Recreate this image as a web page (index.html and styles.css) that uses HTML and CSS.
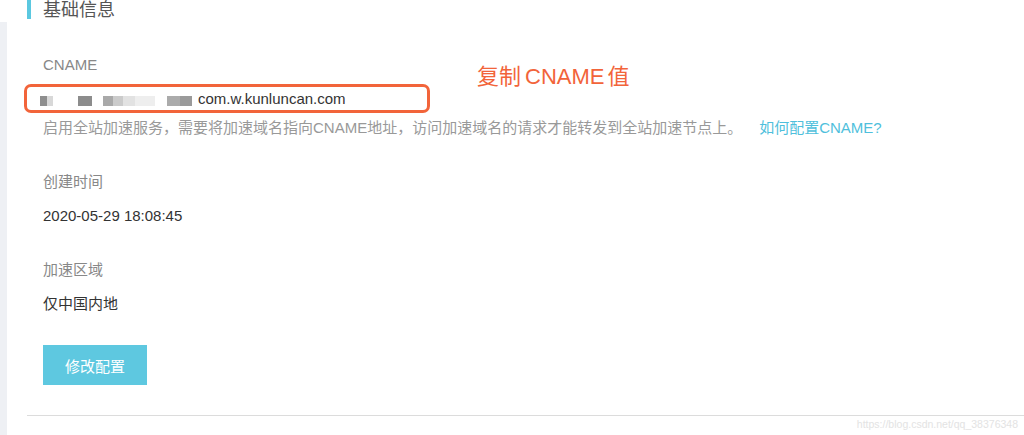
FILE: index.html
```html
<!DOCTYPE html>
<html lang="zh-CN">
<head>
<meta charset="utf-8">
<title>基础信息</title>
<link rel="stylesheet" href="styles.css">
</head>
<body>
<div class="page">
  <div class="strip"></div>
  <div class="panel">
    <div class="title">基础信息</div>
    <div class="fields">
      <div class="label label-first">CNAME</div>
      <div class="cname-box">
        <span class="blur b1"></span>
        <span class="blur b2"></span>
        <span class="blur b3"></span>
        <span class="blur b4"></span>
        <span class="cname-value">com.w.kunluncan.com</span>
      </div>
      <div class="desc">启用全站加速服务，需要将加速域名指向CNAME地址，访问加速域名的请求才能转发到全站加速节点上。<a class="link" href="#">如何配置CNAME?</a></div>
      <div class="label label-gap">创建时间</div>
      <div class="value">2020-05-29 18:08:45</div>
      <div class="label label-gap">加速区域</div>
      <div class="value">仅中国内地</div>
      <button class="btn">修改配置</button>
    </div>
    <div class="divider"></div>
  </div>
  <div class="annotation">复制<span class="ann-latin">CNAME</span>值</div>
  <div class="watermark">https://blog.csdn.net/qq_38376348</div>
</div>
</body>
</html>
```
FILE: styles.css
```css
html, body {
  margin: 0;
  padding: 0;
  background: #fff;
}
body {
  font-family: "Liberation Sans", Arial, "Noto Sans CJK SC", sans-serif;
  width: 1024px;
  height: 435px;
  overflow: hidden;
}
.page {
  position: relative;
  display: flex;
  height: 435px;
}
.strip {
  width: 7px;
  margin-top: 22px;
  background: #eef0f4;
  flex: none;
}
.panel {
  flex: 1;
  margin-left: 20px;
  display: flex;
  flex-direction: column;
}
.title {
  height: 19px;
  line-height: 20px;
  border-left: 4px solid #5bc8e0;
  padding-left: 12px;
  font-size: 18px;
  color: #555;
}
.fields {
  padding-left: 16px;
  display: flex;
  flex-direction: column;
  align-items: flex-start;
}
.label {
  font-size: 15px;
  line-height: 20px;
  color: #888;
}
.label-first {
  margin-top: 36px;
}
.label-gap {
  margin-top: 34px;
}
.value {
  font-size: 15px;
  line-height: 20px;
  color: #333;
  margin-top: 14px;
}
.cname-box {
  margin-top: 9px;
  margin-left: -19px;
  width: 387px;
  height: 23px;
  border: 3px solid #f2643a;
  border-radius: 7px;
  display: flex;
  align-items: center;
  padding-left: 13px;
  box-sizing: content-box;
}
.blur {
  display: block;
  height: 10px;
  margin-top: 5px;
  flex: none;
}
.b1 {
  width: 13px;
  background: linear-gradient(to right, #8e8e8e 0 7px, #d8d8d8 7px 13px);
}
.b2 {
  width: 14px;
  margin-left: 25px;
  background: #8c8c8c;
}
.b3 {
  width: 52px;
  margin-left: 11px;
  background: linear-gradient(to right, #a9a9a9 0 10px, #cbcbcb 10px 20px, #e2e2e2 20px 32px, #eeeeee 32px 52px);
}
.b4 {
  width: 25px;
  margin-left: 12px;
  background: linear-gradient(to right, #ababab 0 13px, #9a9a9a 13px 25px);
}
.cname-value {
  margin-left: 6px;
  font-size: 15px;
  color: #333;
  line-height: 20px;
}
.desc {
  margin-top: 5px;
  font-size: 15px;
  line-height: 20px;
  color: #999;
  white-space: nowrap;
}
.link {
  margin-left: 17px;
  color: #4fbfdc;
  text-decoration: none;
}
.btn {
  margin-top: 31px;
  width: 104px;
  height: 40px;
  border: none;
  background: #5ec8e0;
  color: #fff;
  font-family: "Liberation Sans", Arial, "Noto Sans CJK SC", sans-serif;
  font-size: 15px;
  padding: 0;
}
.divider {
  margin-top: 30px;
  height: 1px;
  background: #dcdcdc;
}
.annotation {
  position: absolute;
  left: 477px;
  top: 64px;
  font-size: 22px;
  line-height: 26px;
  color: #f2643a;
}
.ann-latin {
  margin: 0 3px 0 4px;
}
.watermark {
  position: absolute;
  right: 6px;
  bottom: 5px;
  font-size: 10.5px;
  color: #e3e3e3;
}
```
